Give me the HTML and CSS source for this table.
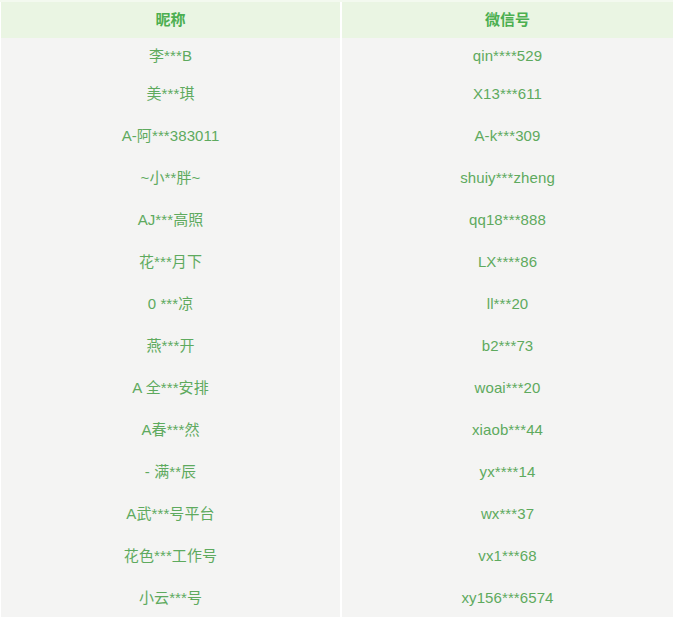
FILE: index.html
```html
<!DOCTYPE html>
<html lang="zh">
<head>
<meta charset="utf-8">
<title>昵称 微信号</title>
<link rel="stylesheet" href="styles.css">
</head>
<body>
<table class="list">
  <thead>
    <tr><th class="c1">昵称</th><th class="c2">微信号</th></tr>
  </thead>
  <tbody>
    <tr class="first"><td class="c1">李***B</td><td class="c2">qin****529</td></tr>
    <tr><td class="c1">美***琪</td><td class="c2">X13***611</td></tr>
    <tr><td class="c1">A-阿***383011</td><td class="c2">A-k***309</td></tr>
    <tr><td class="c1">~小**胖~</td><td class="c2">shuiy***zheng</td></tr>
    <tr><td class="c1">AJ***高照</td><td class="c2">qq18***888</td></tr>
    <tr><td class="c1">花***月下</td><td class="c2">LX****86</td></tr>
    <tr><td class="c1">0 ***凉</td><td class="c2">ll***20</td></tr>
    <tr><td class="c1">燕***开</td><td class="c2">b2***73</td></tr>
    <tr><td class="c1">A 全***安排</td><td class="c2">woai***20</td></tr>
    <tr><td class="c1">A春***然</td><td class="c2">xiaob***44</td></tr>
    <tr><td class="c1">- 满**辰</td><td class="c2">yx****14</td></tr>
    <tr><td class="c1">A武***号平台</td><td class="c2">wx***37</td></tr>
    <tr><td class="c1">花色***工作号</td><td class="c2">vx1***68</td></tr>
    <tr><td class="c1">小云***号</td><td class="c2">xy156***6574</td></tr>
  </tbody>
</table>
</body>
</html>
```
FILE: styles.css
```css
html, body {
  margin: 0;
  padding: 0;
  background: #ffffff;
}
body {
  font-family: "Liberation Sans", Arial, "Noto Sans CJK SC", sans-serif;
  font-size: 15px;
  overflow: hidden;
}
.list {
  width: 673px;
  border-collapse: collapse;
  table-layout: fixed;
  border-left: 1px solid #ffffff;
}
.list .c1 {
  width: 339px;
}
.list .c2 {
  border-left: 2px solid #ffffff;
}
.list th {
  height: 36px;
  padding: 0;
  background: #eaf5e3;
  color: #4caf50;
  font-weight: bold;
  font-size: 15px;
  line-height: 36px;
  text-align: center;
  border-top: 2px solid #f3f9ef;
}
.list td {
  padding: 8px 0 14px;
  height: 20px;
  line-height: 20px;
  background: #f4f4f3;
  color: #5eaa5e;
  text-align: center;
  white-space: nowrap;
  letter-spacing: 0.1px;
}
.list tr.first td {
  padding-bottom: 10px;
}
```
